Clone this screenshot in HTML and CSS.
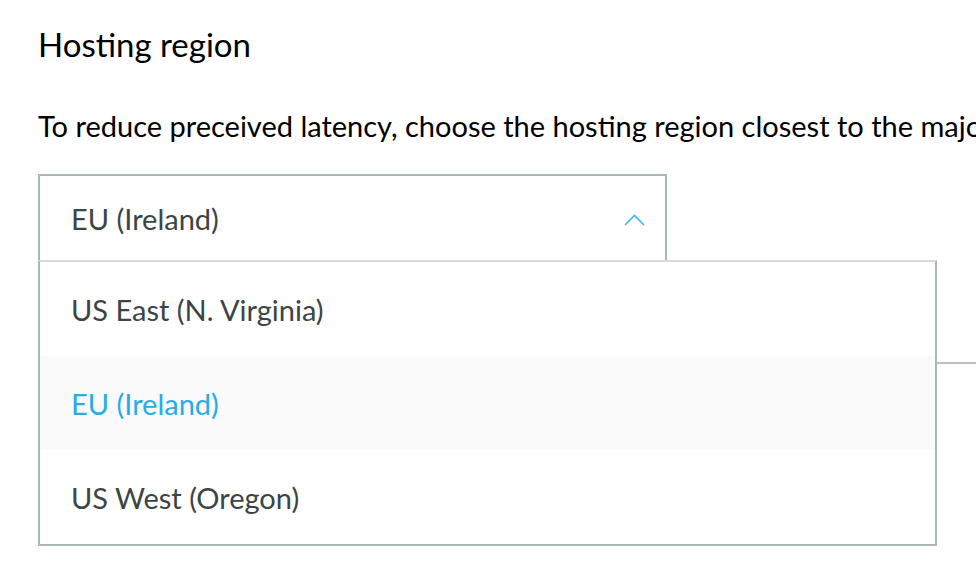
FILE: index.html
```
<!DOCTYPE html>
<html>
<head>
<meta charset="utf-8">
<link rel="stylesheet" href="styles.css">
</head>
<body>
<div class="page">
  <h2 class="title">Hosting region</h2>
  <p class="desc">To reduce preceived latency, choose the hosting region closest to the majority of your users.</p>
  <div class="select">
    <div class="select-box">
      <span class="select-value">EU (Ireland)</span>
      <svg class="chevron" width="22" height="12" viewBox="0 0 22 12"><path d="M2 11 L11.5 1.5 L21 11" fill="none" stroke="#3fb7f0" stroke-width="1.6"/></svg>
    </div>
    <div class="menu">
      <div class="item">US East (N. Virginia)</div>
      <div class="item item-active">EU (Ireland)</div>
      <div class="item">US West (Oregon)</div>
    </div>
  </div>
  <div class="divider"></div>
</div>
</body>
</html>
```

FILE: styles.css
```
html, body {
  margin: 0;
  padding: 0;
  background: #fff;
}
body {
  min-height: 568px;
}
.page {
  padding: 24px 0 0 38px;
  font-family: Lato, "Liberation Sans", sans-serif;
  color: #16191f;
  max-width: 938px;
  overflow-x: hidden;
  min-height: 544px;
}
.title {
  margin: 0;
  font-size: 33px;
  font-weight: 400;
  line-height: 40px;
  color: #000;
}
.desc {
  margin: 45px 0 0 0;
  font-size: 29px;
  line-height: 34px;
  white-space: nowrap;
  overflow: hidden;
  color: #000;
}
.select {
  position: relative;
  margin-top: 31px;
  width: 629px;
  height: 86px;
}
.select-box {
  box-sizing: border-box;
  height: 86px;
  border: 2px solid #aab7b8;
  border-bottom: none;
  display: flex;
  align-items: center;
  justify-content: space-between;
  padding: 0 20px 0 31px;
  font-size: 29px;
  color: #3b4545;
}
.chevron {
  margin-top: 4px;
}
.menu {
  position: absolute;
  top: 86px;
  left: 0;
  width: 899px;
  box-sizing: border-box;
  background: #fff;
  border: 2px solid #aab7b8;
  border-top: 2px solid #d5dbdb;
  z-index: 2;
}
.item {
  height: 94px;
  display: flex;
  align-items: center;
  padding-left: 31px;
  font-size: 29px;
  color: #3b4545;
}
.item-active {
  background: #fafafa;
  color: #26aee4;
}
.divider {
  margin-top: 102px;
  margin-left: 300px;
  height: 2px;
  background: #c0c0c0;
}
```
